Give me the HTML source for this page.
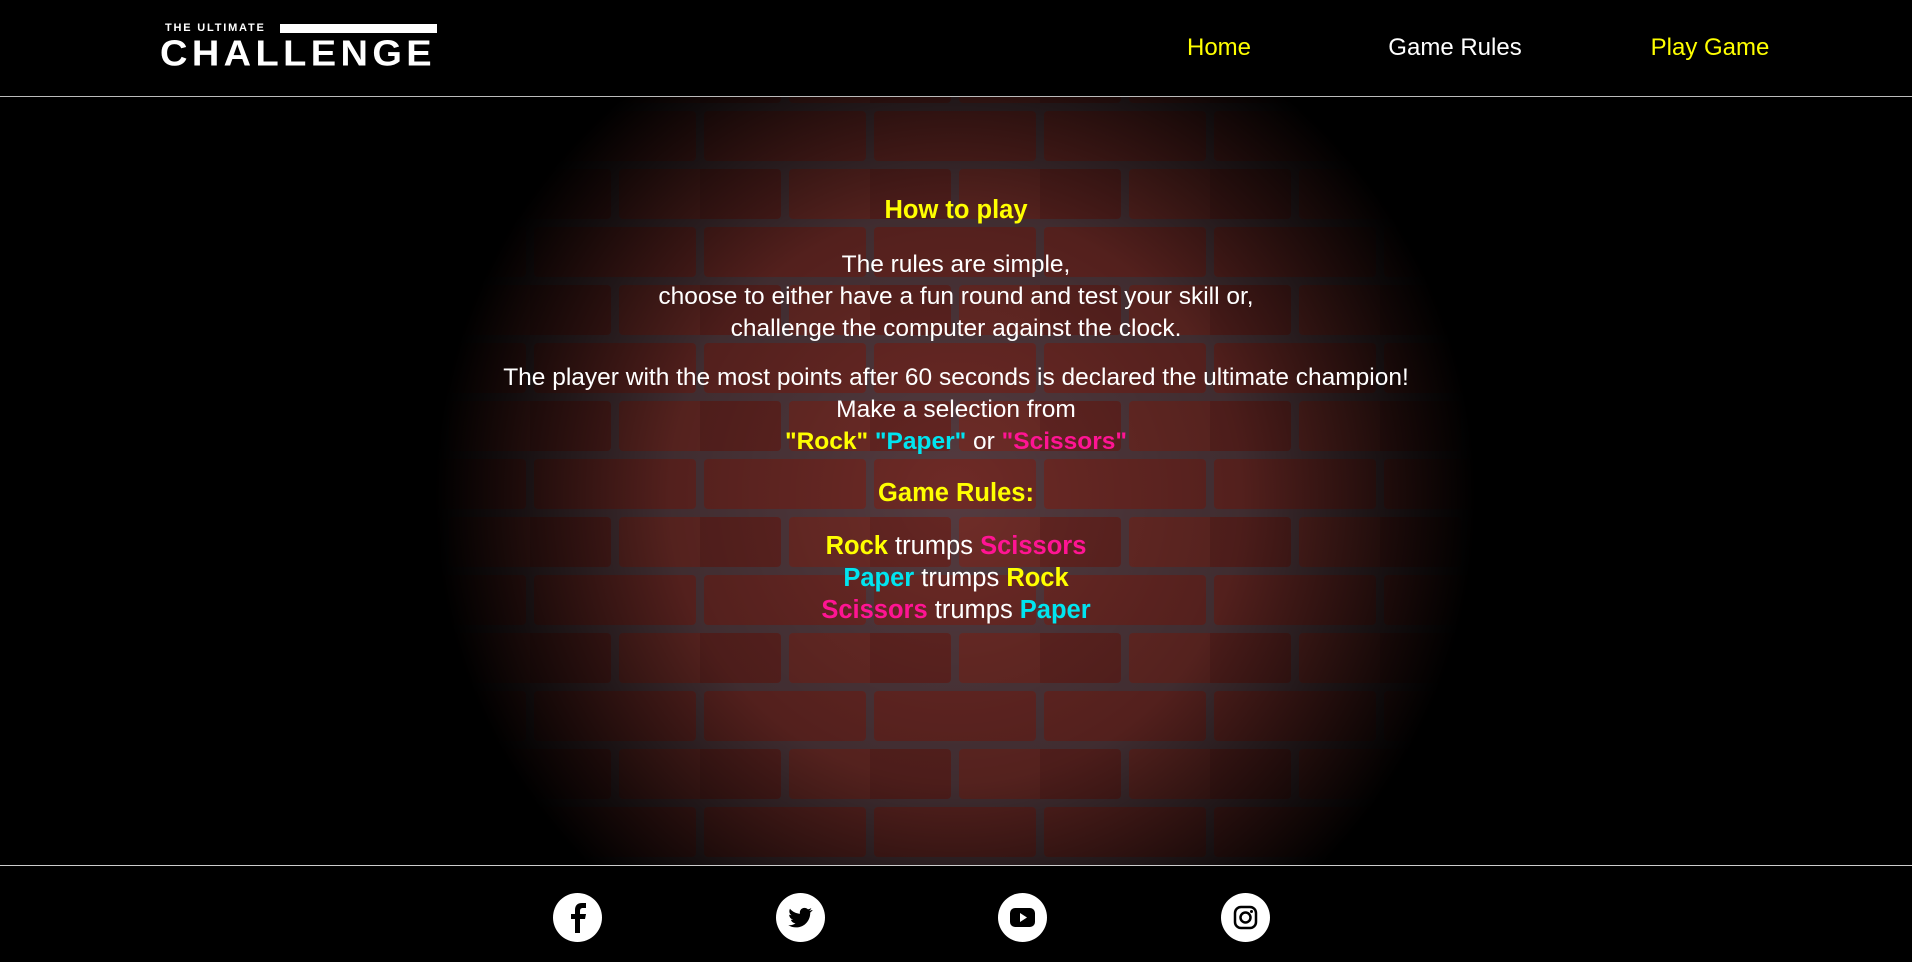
<!DOCTYPE html>
<html><head><meta charset="utf-8"><style>
*{margin:0;padding:0;box-sizing:border-box}
html,body{width:1912px;height:962px;background:#000;overflow:hidden;font-family:"Liberation Sans",sans-serif}
.hdr{position:absolute;left:0;top:0;width:1912px;height:97px;border-bottom:1px solid #bbb;background:#000}
.logo1{position:absolute;left:165px;top:22px;color:#fff;font-weight:bold;font-size:11px;letter-spacing:1.8px}
.bar{position:absolute;left:280px;top:24px;width:157px;height:9px;background:#fff}
.logo2{position:absolute;left:160px;top:36px;color:#fff;font-weight:900;font-size:38px;letter-spacing:4.4px;line-height:36px;transform:scaleY(0.95)}
.nav{position:absolute;top:34px;font-size:24px;transform:translateX(-50%);white-space:nowrap}
.main{position:absolute;left:0;top:97px;width:1912px;height:768px;overflow:hidden}
.ov{position:absolute;inset:0;background:radial-gradient(ellipse 520px 520px at 955px 400px,rgba(0,0,0,0.2) 0%,rgba(0,0,0,0.4) 55%,rgba(0,0,0,1) 100%)}
.txt{position:absolute;left:0;width:1912px;text-align:center;color:#fff;font-size:24.5px}
.y{color:#ffff00;font-weight:bold}.c{color:#00e5f0;font-weight:bold}.p{color:#ff1493;font-weight:bold}
.ftr{position:absolute;left:0;top:865px;width:1912px;height:97px;border-top:1px solid #ccc;background:#000}
.ic{position:absolute;top:27px;width:49px;height:49px;border-radius:50%;background:#fff}
.ic svg{position:absolute;left:0;top:0}
</style></head><body>
<div class="hdr">
<div class="logo1">THE ULTIMATE</div><div class="bar"></div>
<div class="logo2">CHALLENGE</div>
<div class="nav" style="left:1219px;color:#ffff00">Home</div>
<div class="nav" style="left:1455px;color:#fff">Game Rules</div>
<div class="nav" style="left:1710px;color:#ffff00">Play Game</div>
</div>
<div class="main">
<svg width="1912" height="768" style="position:absolute;left:0;top:0">
<defs><pattern id="b" width="170" height="116" patternUnits="userSpaceOnUse" x="20" y="10">
<rect width="170" height="116" fill="#6a4a50"/>
<rect x="4" y="4" width="162" height="50" rx="4" fill="#8a3530"/>
<rect x="-81" y="62" width="162" height="50" rx="4" fill="#7f302c"/>
<rect x="89" y="62" width="162" height="50" rx="4" fill="#8c3832"/>
</pattern></defs>
<rect width="1912" height="768" fill="url(#b)"/>
</svg>
<div class="ov"></div>
</div>
<div class="txt" style="top:196px;font-size:25.5px"><span class="y">How to play</span></div>
<div class="txt" style="top:249px;line-height:32px">The rules are simple,<br>choose to either have a fun round and test your skill or,<br>challenge the computer against the clock.</div>
<div class="txt" style="top:362px;line-height:32px">The player with the most points after 60 seconds is declared the ultimate champion!<br>Make a selection from<br><span class="y">"Rock"</span> <span class="c">"Paper"</span> or <span class="p">"Scissors"</span></div>
<div class="txt" style="top:479px;font-size:25.5px"><span class="y">Game Rules:</span></div>
<div class="txt" style="top:530px;line-height:32px;font-size:25.5px"><span class="y">Rock</span> trumps <span class="p">Scissors</span><br><span class="c">Paper</span> trumps <span class="y">Rock</span><br><span class="p">Scissors</span> trumps <span class="c">Paper</span></div>
<div class="ftr">
<div class="ic" style="left:553px"><svg width="49" height="49"><path d="M27 40V26h5l1-5h-6v-3c0-2 1-3 3-3h3v-5h-4c-5 0-7 3-7 7v4h-4v5h4v14z" fill="#000"/></svg></div>
<div class="ic" style="left:776px"><svg width="49" height="49"><path d="M36 17c-1 .5-2 .8-3 .9 1-.7 2-1.6 2.3-2.8-1 .6-2.2 1-3.3 1.3-2-2.2-6-2-7.6.8-.6 1-.7 2.3-.4 3.5-4-.2-7.5-2-10-5-1.3 2.2-.6 5.2 1.5 6.5-.8 0-1.6-.3-2.3-.6 0 2.4 1.7 4.5 4 5-.7.2-1.5.2-2.3.1.6 2 2.5 3.4 4.6 3.5-2 1.6-4.6 2.3-7.2 2 2.3 1.4 5 2.2 7.7 2.2 9.3 0 14.5-7.8 14.2-14.8 1-.7 1.8-1.6 2.5-2.6z" fill="#000"/></svg></div>
<div class="ic" style="left:998px"><svg width="49" height="49"><rect x="12" y="15" width="25" height="19" rx="5" fill="#000"/><path d="M22 20v9l7-4.5z" fill="#fff"/></svg></div>
<div class="ic" style="left:1221px"><svg width="49" height="49"><rect x="14" y="14" width="21" height="21" rx="6" fill="none" stroke="#000" stroke-width="2.5"/><circle cx="24.5" cy="24.5" r="5" fill="none" stroke="#000" stroke-width="2.5"/><circle cx="30.5" cy="18.5" r="1.5" fill="#000"/></svg></div>
</div>
</body></html>
